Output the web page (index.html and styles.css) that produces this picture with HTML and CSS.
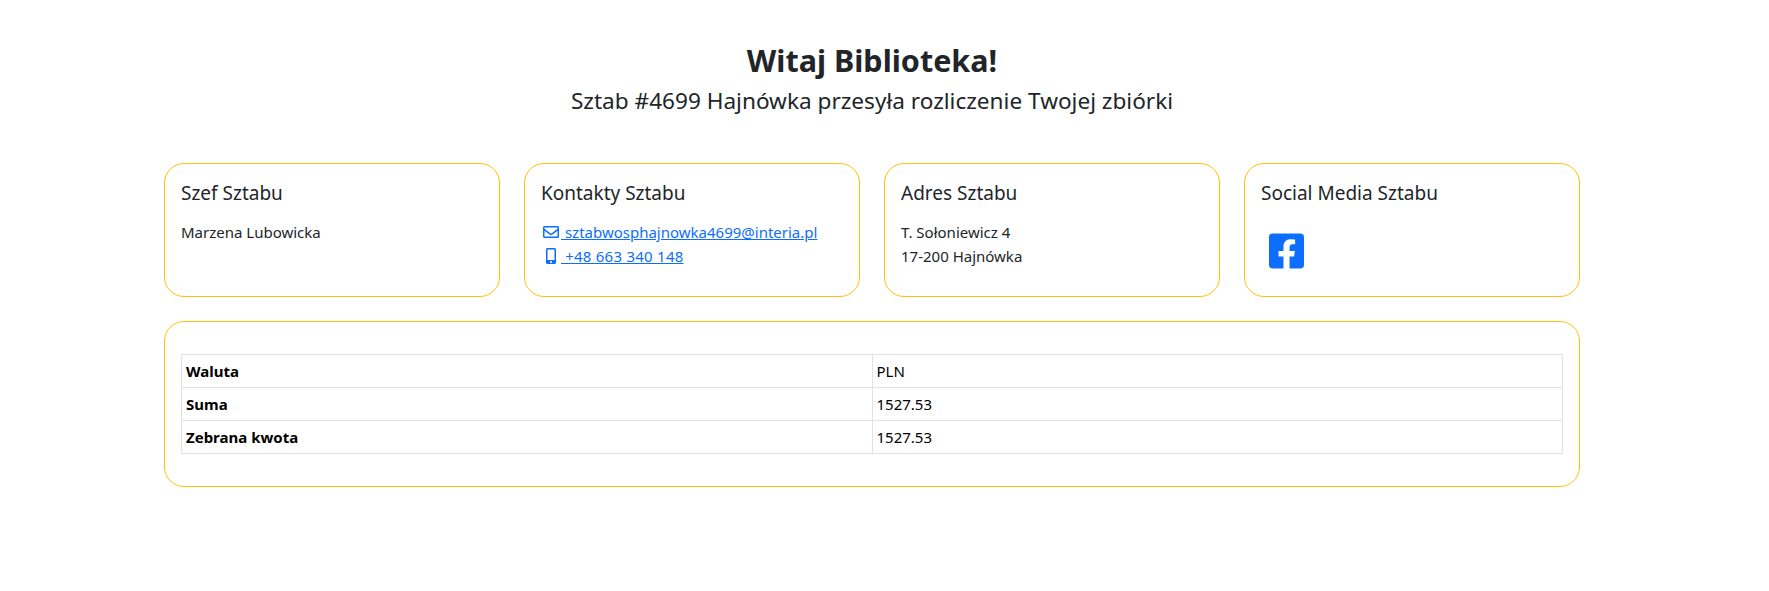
FILE: index.html
```html
<!DOCTYPE html>
<html lang="pl">
<head>
<meta charset="utf-8">
<title>Sztab #4699 Hajnówka</title>
<link rel="stylesheet" href="styles.css">
</head>
<body>
<main class="page">
  <header class="hero">
    <h1 class="hero-title">Witaj Biblioteka!</h1>
    <p class="hero-sub">Sztab #4699 Hajnówka przesyła rozliczenie Twojej zbiórki</p>
  </header>
  <section class="cards">
    <article class="card">
      <h5 class="card-title">Szef Sztabu</h5>
      <p class="card-text">Marzena Lubowicka</p>
    </article>
    <article class="card">
      <h5 class="card-title">Kontakty Sztabu</h5>
      <p class="card-text">
        <a class="link" href="#"><svg class="ico" viewBox="0 0 512 512"><path fill="currentColor" d="M464 64H48C21.49 64 0 85.49 0 112v288c0 26.51 21.49 48 48 48h416c26.51 0 48-21.49 48-48V112c0-26.51-21.49-48-48-48zm0 48v40.805c-22.422 18.259-58.168 46.651-134.587 106.49-16.841 13.247-50.201 45.072-73.413 44.701-23.208.375-56.579-31.459-73.413-44.701C106.18 199.465 70.425 171.067 48 152.805V112h416zM48 400V214.398c22.914 18.251 55.409 43.862 104.938 82.646 21.857 17.205 60.134 55.186 103.062 54.955 42.717.231 80.509-37.199 103.053-54.947 49.528-38.783 82.032-64.401 104.947-82.653V400H48z"/></svg> sztabwosphajnowka4699@interia.pl</a><br>
        <a class="link link-phone" href="#"><svg class="ico" viewBox="0 0 320 512"><path fill="currentColor" d="M272 0H48C21.5 0 0 21.5 0 48v416c0 26.5 21.5 48 48 48h224c26.5 0 48-21.5 48-48V48c0-26.5-21.5-48-48-48zM160 480c-17.7 0-32-14.3-32-32s14.3-32 32-32 32 14.3 32 32-14.3 32-32 32zm112-108c0 6.6-5.4 12-12 12H60c-6.6 0-12-5.4-12-12V60c0-6.6 5.4-12 12-12h200c6.6 0 12 5.4 12 12v312z"/></svg> +48 663 340 148</a>
      </p>
    </article>
    <article class="card">
      <h5 class="card-title">Adres Sztabu</h5>
      <p class="card-text">T. Sołoniewicz 4<br>17-200 Hajnówka</p>
    </article>
    <article class="card">
      <h5 class="card-title">Social Media Sztabu</h5>
      <div class="social">
        <a class="social-link" href="#"><svg class="fb" viewBox="0 0 448 512"><path fill="currentColor" d="M400 32H48A48 48 0 0 0 0 80v352a48 48 0 0 0 48 48h137.25V327.69h-63V256h63v-54.64c0-62.15 37-96.48 93.67-96.48 27.14 0 55.52 4.84 55.52 4.84v61h-31.27c-30.81 0-40.42 19.12-40.42 38.73V256h68.78l-11 71.69h-57.78V480H400a48 48 0 0 0 48-48V80a48 48 0 0 0-48-48z"/></svg></a>
      </div>
    </article>
  </section>
  <section class="card card-wide">
    <table class="table">
      <tbody>
        <tr><th>Waluta</th><td>PLN</td></tr>
        <tr><th>Suma</th><td>1527.53</td></tr>
        <tr><th>Zebrana kwota</th><td>1527.53</td></tr>
      </tbody>
    </table>
  </section>
</main>
</body>
</html>
```
FILE: styles.css
```css
* { box-sizing: border-box; }
html, body { margin: 0; padding: 0; background: #fff; }
body {
  font-family: "Noto Sans", "Open Sans", sans-serif;
  font-size: 15px;
  line-height: 24px;
  color: #212529;
}
.page {
  width: 1416px;
  margin-left: 164px;
  padding-top: 40px;
}
.hero { text-align: center; margin-bottom: 44px; }
.hero-title { margin: 0; font-size: 30.5px; line-height: 40px; font-weight: 700; }
.hero-sub { margin: 3px 0 0; font-size: 22.6px; line-height: 36px; }
.cards {
  display: grid;
  grid-template-columns: repeat(4, 1fr);
  gap: 24px;
  margin-bottom: 24px;
}
.card {
  border: 1px solid #ffc107;
  border-radius: 20px;
  padding: 16px;
  height: 134px;
  background: #fff;
}
.card-title { margin: 1px 0 15px; font-size: 19px; line-height: 24px; font-weight: 400; }
.card-text { margin: 0; }
.link { color: #0d6efd; text-decoration: underline; }
.link-phone { letter-spacing: .25px; }
.ico { display: inline-block; width: 20px; height: 16px; vertical-align: -2px; }
.social { padding: 11px 8px 0; }
.social-link { display: block; width: 35px; height: 40px; color: #0d6efd; }
.fb { display: block; width: 35px; height: 40px; }
.card-wide { height: 166px; padding: 32px 16px; }
.table { width: 100%; border-collapse: collapse; color: #000; table-layout: fixed; }
.table th, .table td { border: 1px solid #dee2e6; padding: 4px; text-align: left; }
.table th { font-weight: 700; }
```
